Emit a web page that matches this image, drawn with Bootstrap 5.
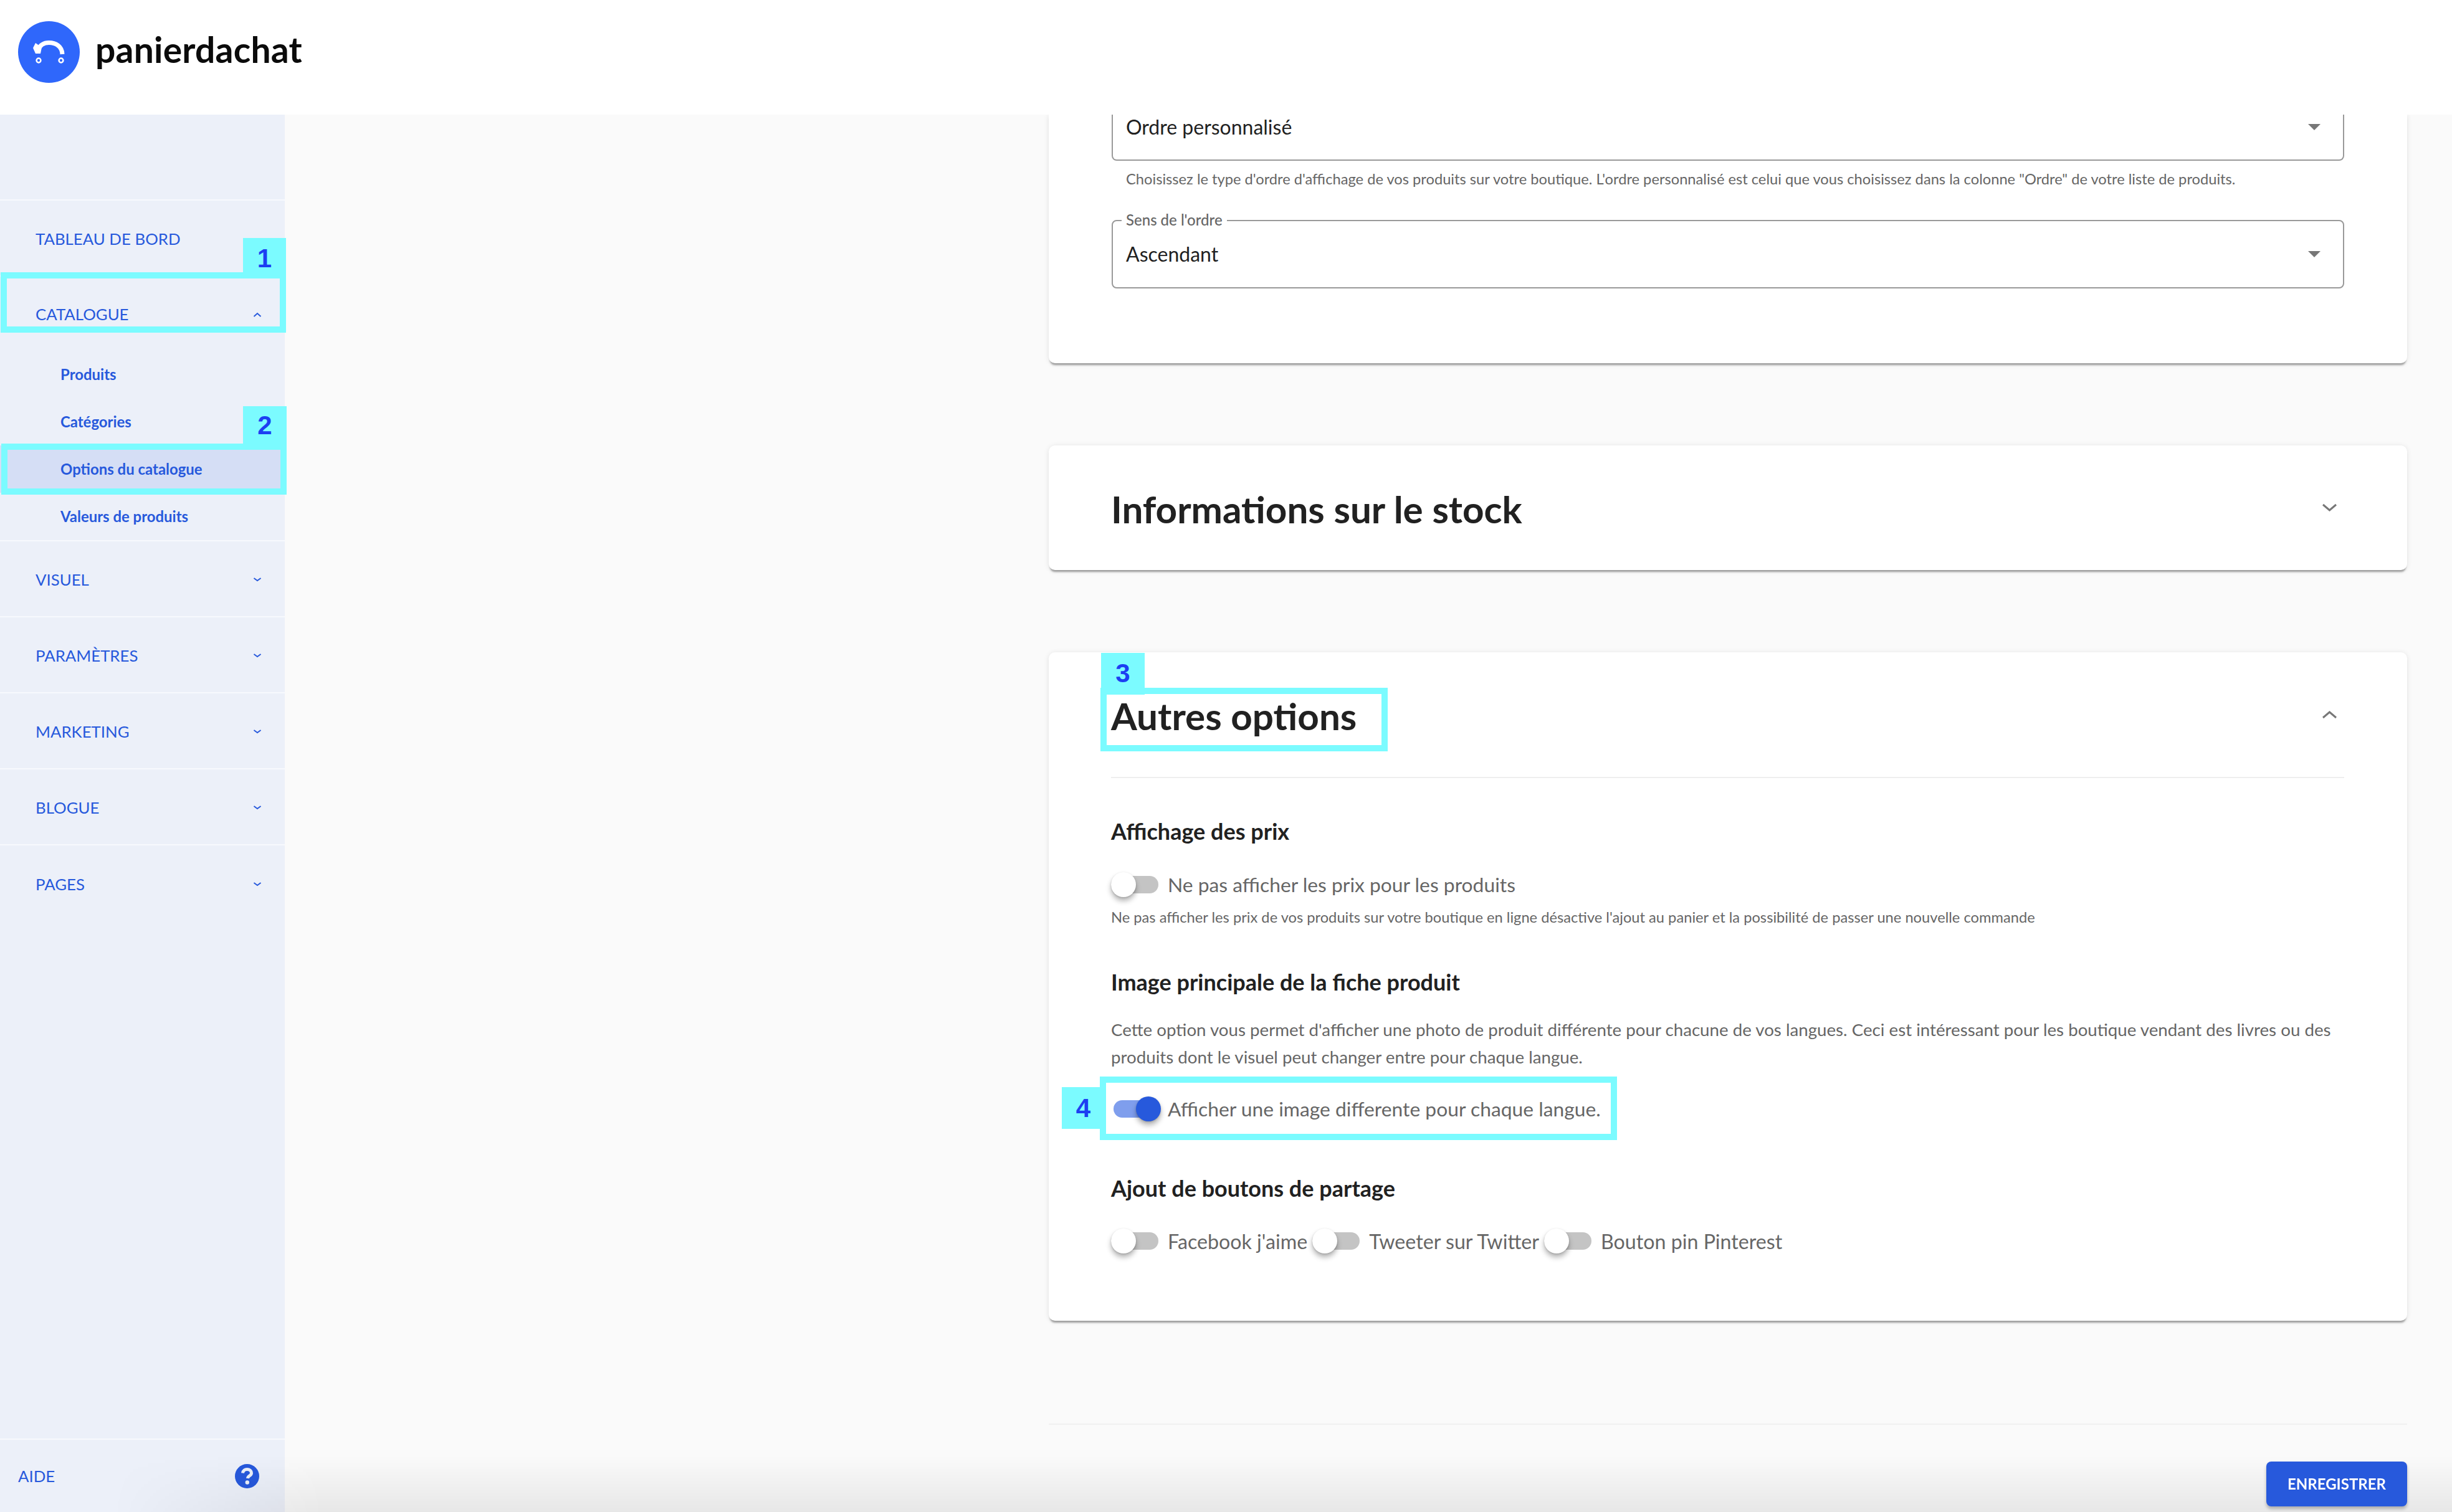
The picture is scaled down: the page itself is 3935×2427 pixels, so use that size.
<!DOCTYPE html>
<html lang="fr">
<head>
<meta charset="utf-8">
<title>panierdachat</title>
<link href="https://cdn.jsdelivr.net/npm/bootstrap@5.3.0/dist/css/bootstrap.min.css" rel="stylesheet">
<style>
:root{--pa-blue:#2759dc;--pa-cyan:#7bfbff;--pa-mark:#1c3ff2;--pa-grey:#666;}
html,body{height:100%;}
body{width:3935px;height:2427px;overflow:hidden;background:#fafafa;font-family:"Lato","Liberation Sans",sans-serif;color:#212121;}
.top-bar{height:184px;background:#fff;padding:0 0 17px 29px;gap:25px;position:relative;z-index:3;}
.logo-word{font-family:"Lato",sans-serif;font-weight:700;font-size:57px;color:#0b0b0b;letter-spacing:.2px;line-height:1;margin-top:-9px;}
.shell{height:2243px;}
.side{width:457px;flex:none;background:#ecf0f9;position:relative;z-index:2;padding-top:136px;}
.side-list{border-top:2px solid #f7f9fd;}
.side-row{height:122px;padding:2px 37px 0 57px;border-bottom:2px solid #f7f9fd;font-size:25.8px;color:var(--pa-blue);position:relative;}
.side-row.open{height:119px;padding-top:2px;border-bottom:0;}
.side-row.last{border-bottom:0;}
.side-sub{border-bottom:2px solid #f7f9fd;}
.side-sub a{display:block;height:76px;line-height:76px;padding-left:97px;font-size:23.95px;font-weight:700;color:var(--pa-blue);text-decoration:none;position:relative;}
.side-sub a.current{background:#d5def5;}
.side-foot{position:absolute;left:0;right:0;bottom:0;height:118px;border-top:2px solid #f7f9fd;padding:0 41px 0 29px;font-size:25.8px;color:var(--pa-blue);}
.chev-s{width:14px;height:8px;flex:none;}
.frame{position:absolute;border:10px solid var(--pa-cyan);pointer-events:none;z-index:4;}
.tag{position:absolute;background:var(--pa-cyan);color:var(--pa-mark);font-family:"Liberation Sans",sans-serif;font-weight:700;font-size:42px;line-height:1;display:flex;align-items:center;justify-content:center;z-index:4;}
.frame-cat{left:1px;right:-2px;top:-7px;bottom:29px;}
.tag-cat{left:390px;top:-62px;width:69px;height:65px;}
.frame-opt{left:2px;right:-3px;top:-3px;bottom:-3px;}
.tag-opt{left:390px;top:-63px;width:70px;height:60px;padding-top:2px;}
.work{flex:1;min-width:0;overflow:hidden;}
.work-col{width:2180px;margin-left:1226px;}
.sheet{background:#fff;border:0;border-radius:10px;box-shadow:0 5px 3px -2px rgba(0,0,0,.34),0 1px 9px rgba(0,0,0,.1);}
.sheet-first{border-radius:0 0 10px 10px;height:399px;padding:0 101px;}
.sheet-gap{margin-top:132px;}
.pick{border:2px solid #999;border-radius:0 0 8px 8px;padding:0 36px 0 21px;font-size:32px;color:#212121;position:relative;background:#fff;}
.pick-one{border-top:0;height:74px;padding-bottom:32px;}
.pick-two{height:110px;border-radius:8px;margin-top:48px;}
.pick-label{position:absolute;left:14px;top:-16px;background:#fff;padding:0 7px;font-size:24px;line-height:28px;color:var(--pa-grey);font-weight:500;}
.caret-dn{width:0;height:0;border-left:10px solid transparent;border-right:10px solid transparent;border-top:10px solid #777;}
.note{font-size:23.7px;line-height:36px;color:var(--pa-grey);}
.note-first{margin:11px 0 0 23px;}
.sheet-head{height:200px;padding:0 112px 0 100px;position:relative;}
.sheet-title{font-size:60.2px;font-weight:700;line-height:1;margin:4px 0 0;color:#212121;position:relative;}
.chev-b{width:25px;height:14px;flex:none;}
.frame-title{left:-17px;top:-15px;width:461px;height:102px;}
.tag-title{left:-16px;top:-71px;width:70px;height:67px;}
.sheet-body{padding:0 101px 106px 100px;}
.rule{height:2px;background:#eee;}
.sec-title{font-size:36px;font-weight:700;line-height:50px;margin:0;color:#212121;}
.switch-row{height:44px;font-size:31.8px;color:var(--pa-grey);position:relative;}
.switch-row.wide{font-size:32.2px;}
.switch-item{display:inline-flex;align-items:center;height:44px;margin:0 8px 0 0;padding-top:2px;}
.sw{display:block;width:76px;height:28px;margin:-2px 15px 0 0;border-radius:14px;background:#c4c4c4;position:relative;flex:none;}
.sw i{position:absolute;left:0;top:-6px;width:40px;height:40px;border-radius:50%;background:#fff;box-shadow:0 6px 8px rgba(0,0,0,.3),0 1px 3px rgba(0,0,0,.15);}
.sw.on{background:#7f9eed;left:4px;margin-right:19px;width:72px;}
.sw.on i{left:36px;background:var(--pa-blue);}
.para{font-size:27.7px;line-height:44px;color:var(--pa-grey);margin:30px 0 0;}
.frame-switch{left:-18px;top:-30px;width:830px;height:102px;}
.tag-switch{left:-79px;top:-13px;width:61px;height:67px;padding-left:8px;}
.end-rule{height:2px;background:#f0f0f0;margin-top:165px;}
.save-row{margin-top:59px;position:relative;z-index:3;}
.save{background:var(--pa-blue);border:0;color:#fff;font-size:24px;font-weight:700;border-radius:8px;width:226px;height:72px;padding:0;text-transform:uppercase;box-shadow:0 4px 5px rgba(0,0,0,.25);}
.save:hover{background:var(--pa-blue);color:#fff;}
.fade-bottom{position:fixed;left:0;right:0;bottom:0;height:90px;pointer-events:none;z-index:2;background:linear-gradient(to bottom,rgba(0,0,0,0),rgba(0,0,0,.075));-webkit-mask-image:linear-gradient(to right,transparent 180px,#000 520px);mask-image:linear-gradient(to right,transparent 180px,#000 520px);}
.mt-60{margin-top:60px;}.sp-39{margin-top:39px;}.sp-12{margin-top:12px;}.sp-61{margin-top:61px;}.sp-80{margin-top:80px;}.sp-38{margin-top:38px;}
</style>
</head>
<body>
<header class="top-bar d-flex align-items-center">
  <svg width="99" height="99" viewBox="0 0 99 99" aria-label="logo"><circle cx="49.5" cy="49.5" r="49.5" fill="#2f67fb"/><path d="M71 53C70.500 40 60 34.500 49.500 34.500 41 34.500 35 39 32 46" fill="none" stroke="#fff" stroke-width="7"/><path d="M28 35 24 43 28 52 36 52 38 42Z" fill="#fff"/><circle cx="33" cy="63" r="3.400" fill="none" stroke="#fff" stroke-width="2.500"/><circle cx="69" cy="63" r="3.400" fill="none" stroke="#fff" stroke-width="2.500"/></svg>
  <span class="logo-word">panierdachat</span>
</header>
<div class="shell d-flex">
  <aside class="side">
    <div class="side-list">
      <div class="side-row d-flex align-items-center">TABLEAU DE BORD</div>
      <div class="side-row open d-flex align-items-center justify-content-between">
        <span>CATALOGUE</span>
        <svg class="chev-s" viewBox="0 0 14 8"><path d="M1.500 7 7 2 12.500 7" fill="none" stroke="#2759dc" stroke-width="2"/></svg>
        <span class="frame frame-cat"></span>
        <span class="tag tag-cat">1</span>
      </div>
      <div class="side-sub">
        <a href="#">Produits</a>
        <a href="#">Catégories</a>
        <a href="#" class="current">Options du catalogue<span class="frame frame-opt"></span><span class="tag tag-opt">2</span></a>
        <a href="#">Valeurs de produits</a>
      </div>
      <div class="side-row d-flex align-items-center justify-content-between"><span>VISUEL</span><svg class="chev-s" viewBox="0 0 14 8"><path d="M1.500 2 7 6 12.500 2" fill="none" stroke="#2759dc" stroke-width="2"/></svg></div>
      <div class="side-row d-flex align-items-center justify-content-between"><span>PARAMÈTRES</span><svg class="chev-s" viewBox="0 0 14 8"><path d="M1.500 2 7 6 12.500 2" fill="none" stroke="#2759dc" stroke-width="2"/></svg></div>
      <div class="side-row d-flex align-items-center justify-content-between"><span>MARKETING</span><svg class="chev-s" viewBox="0 0 14 8"><path d="M1.500 2 7 6 12.500 2" fill="none" stroke="#2759dc" stroke-width="2"/></svg></div>
      <div class="side-row d-flex align-items-center justify-content-between"><span>BLOGUE</span><svg class="chev-s" viewBox="0 0 14 8"><path d="M1.500 2 7 6 12.500 2" fill="none" stroke="#2759dc" stroke-width="2"/></svg></div>
      <div class="side-row last d-flex align-items-center justify-content-between"><span>PAGES</span><svg class="chev-s" viewBox="0 0 14 8"><path d="M1.500 2 7 6 12.500 2" fill="none" stroke="#2759dc" stroke-width="2"/></svg></div>
    </div>
    <div class="side-foot d-flex align-items-center justify-content-between">
      <span>AIDE</span>
      <svg width="39" height="39" viewBox="0 0 39 39"><circle cx="19.500" cy="19.500" r="19.500" fill="#2759dc"/><path d="M12.500 14.500C13 10.500 16 8.500 19.500 8.500 23.500 8.500 26.500 11 26.500 14.500 26.500 19 21 18.500 20.500 23" fill="none" stroke="#ecf0f9" stroke-width="5"/><circle cx="19.800" cy="29.500" r="3.200" fill="#ecf0f9"/></svg>
    </div>
  </aside>
  <main class="work">
    <div class="work-col">
      <section class="card sheet sheet-first">
        <div class="pick pick-one d-flex align-items-center justify-content-between"><span>Ordre personnalisé</span><span class="caret-dn"></span></div>
        <div class="note note-first">Choisissez le type d'ordre d'affichage de vos produits sur votre boutique. L'ordre personnalisé est celui que vous choisissez dans la colonne "Ordre" de votre liste de produits.</div>
        <div class="pick pick-two d-flex align-items-center justify-content-between"><span class="pick-label">Sens de l'ordre</span><span>Ascendant</span><span class="caret-dn"></span></div>
      </section>
      <section class="card sheet sheet-gap">
        <div class="sheet-head d-flex align-items-center justify-content-between">
          <h2 class="sheet-title">Informations sur le stock</h2>
          <svg class="chev-b" viewBox="0 0 25 14"><path d="M2 2 12.500 11 23 2" fill="none" stroke="#777" stroke-width="3"/></svg>
        </div>
      </section>
      <section class="card sheet sheet-gap">
        <div class="sheet-head d-flex align-items-center justify-content-between">
          <h2 class="sheet-title">Autres options<span class="frame frame-title"></span><span class="tag tag-title">3</span></h2>
          <svg class="chev-b" viewBox="0 0 25 14"><path d="M2 12 12.500 3 23 12" fill="none" stroke="#777" stroke-width="3"/></svg>
        </div>
        <div class="sheet-body">
          <div class="rule"></div>
          <h3 class="sec-title mt-60">Affichage des prix</h3>
          <div class="switch-row sp-39"><label class="switch-item"><span class="sw"><i></i></span>Ne pas afficher les prix pour les produits</label></div>
          <div class="note sp-12">Ne pas afficher les prix de vos produits sur votre boutique en ligne désactive l'ajout au panier et la possibilité de passer une nouvelle commande</div>
          <h3 class="sec-title sp-61">Image principale de la fiche produit</h3>
          <p class="para">Cette option vous permet d'afficher une photo de produit différente pour chacune de vos langues. Ceci est intéressant pour les boutique vendant des livres ou des produits dont le visuel peut changer entre pour chaque langue.</p>
          <div class="switch-row sp-39"><label class="switch-item"><span class="sw on"><i></i></span>Afficher une image differente pour chaque langue.</label><span class="frame frame-switch"></span><span class="tag tag-switch">4</span></div>
          <h3 class="sec-title sp-80">Ajout de boutons de partage</h3>
          <div class="switch-row wide sp-38">
            <label class="switch-item"><span class="sw"><i></i></span>Facebook j'aime</label><label class="switch-item"><span class="sw"><i></i></span>Tweeter sur Twitter</label><label class="switch-item"><span class="sw"><i></i></span>Bouton pin Pinterest</label>
          </div>
        </div>
      </section>
      <div class="end-rule"></div>
      <div class="save-row d-flex justify-content-end"><button type="button" class="btn save">Enregistrer</button></div>
    </div>
  </main>
</div>
<div class="fade-bottom"></div>
<script src="https://cdn.jsdelivr.net/npm/bootstrap@5.3.0/dist/js/bootstrap.bundle.min.js"></script>
</body>
</html>
